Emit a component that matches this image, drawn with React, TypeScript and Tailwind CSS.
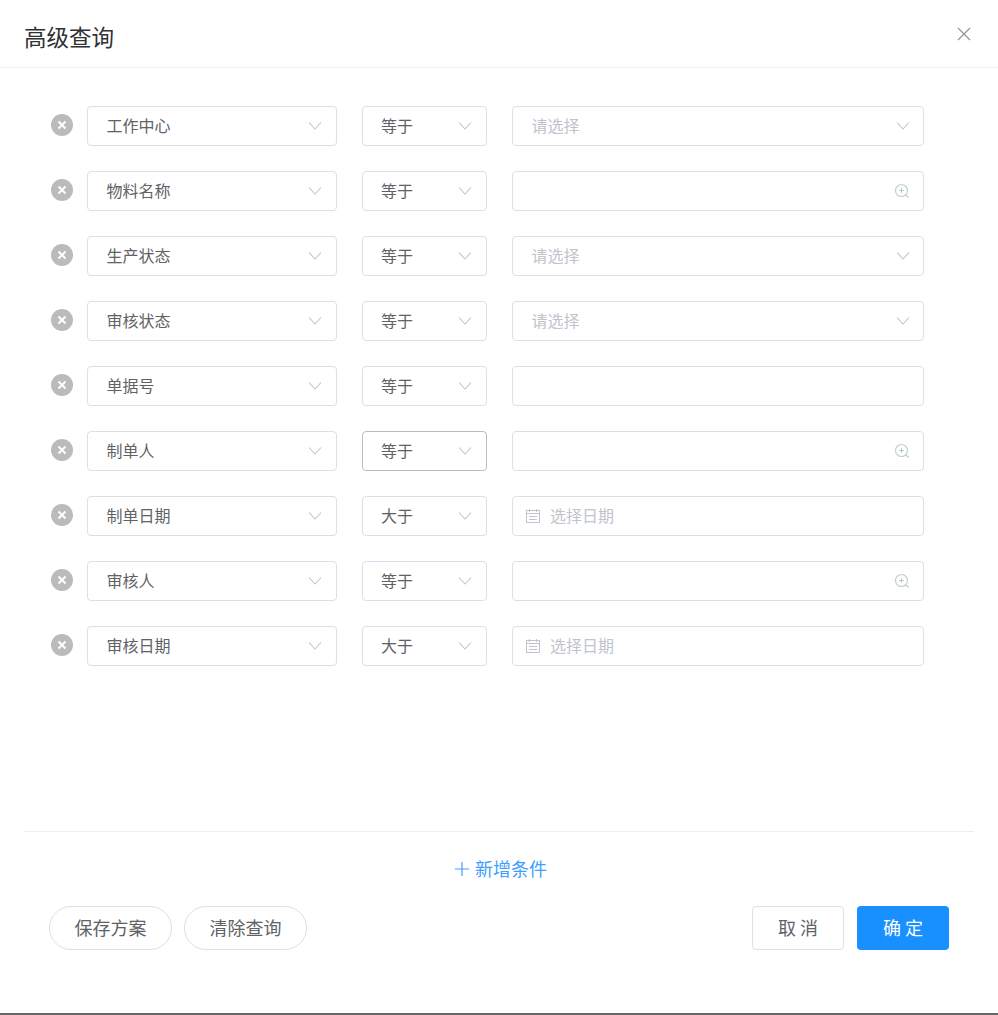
import React from 'react';

const Chevron = () => (
  <svg width="14" height="10" viewBox="0 0 14 10" fill="none" className="shrink-0">
    <path d="M1 1.500 7 8l6-6.500" stroke="#c0c4cc" strokeWidth="1.100" />
  </svg>
);

const RemoveIcon = () => (
  <svg width="22" height="22" viewBox="0 0 22 22" className="shrink-0 mt-[7.5px]">
    <circle cx="11" cy="11" r="11" fill="#bbbbbb" />
    <path d="M7.500 7.500l7 7M14.500 7.500l-7 7" stroke="#fff" strokeWidth="2" />
  </svg>
);

const ZoomIcon = () => (
  <svg width="16" height="16" viewBox="0 0 16 16" fill="none" className="shrink-0">
    <circle cx="7.500" cy="7.500" r="6" stroke="#c3cfd0" strokeWidth="1.200" />
    <path d="M11.800 11.800 14.500 14.500" stroke="#c3cfd0" strokeWidth="1.400" />
    <path d="M5.200 7.500h4.600M7.500 5.200v4.600" stroke="#a9c9c4" strokeWidth="1" />
  </svg>
);

const CalendarIcon = () => (
  <svg width="14" height="14" viewBox="0 0 14 14" fill="none" className="shrink-0">
    <rect x="0.500" y="1.500" width="13" height="12" stroke="#c0c4cc" />
    <path d="M3.500 0v3M10.500 0v3M1 4.500h12M3 7.500h8M3 10.500h8" stroke="#c0c4cc" />
  </svg>
);

const fieldBox = 'h-10 rounded-[4px] border bg-white flex items-center text-base';

const Select = ({ value, width, active, pl }: { value: string; width: string; active?: boolean; pl: string }) => (
  <div className={`${fieldBox} ${width} ${pl} pr-[14px] justify-between text-[#606266] ${active ? 'border-[#b9bcc4]' : 'border-[#dcdfe6]'}`}>
    <span className="mb-[2px]">{value}</span>
    <Chevron />
  </div>
);

type ValueField = 'select' | 'lookup' | 'text' | 'date';

const rows: { field: string; op: string; kind: ValueField; active?: boolean }[] = [
  { field: '工作中心', op: '等于', kind: 'select' },
  { field: '物料名称', op: '等于', kind: 'lookup' },
  { field: '生产状态', op: '等于', kind: 'select' },
  { field: '审核状态', op: '等于', kind: 'select' },
  { field: '单据号', op: '等于', kind: 'text' },
  { field: '制单人', op: '等于', kind: 'lookup', active: true },
  { field: '制单日期', op: '大于', kind: 'date' },
  { field: '审核人', op: '等于', kind: 'lookup' },
  { field: '审核日期', op: '大于', kind: 'date' },
];

const ValueInput = ({ kind }: { kind: ValueField }) => {
  if (kind === 'select') {
    return (
      <div className={`${fieldBox} border-[#dcdfe6] w-[412px] pl-[18.5px] pr-[13px] justify-between text-[#c0c4cc]`}>
        <span className="mb-[2px]">请选择</span>
        <Chevron />
      </div>
    );
  }
  if (kind === 'lookup') {
    return (
      <div className={`${fieldBox} border-[#dcdfe6] w-[412px] pr-[13px] justify-end`}>
        <ZoomIcon />
      </div>
    );
  }
  if (kind === 'date') {
    return (
      <div className={`${fieldBox} border-[#dcdfe6] w-[412px] pl-[13px] gap-[10px] text-[#c0c4cc]`}>
        <CalendarIcon />
        <span className="mb-[2px]">选择日期</span>
      </div>
    );
  }
  return <div className={`${fieldBox} border-[#dcdfe6] w-[412px]`} />;
};

const App: React.FC = () => {
  return (
    <div
      className="h-[1015px] w-[998px] bg-white flex flex-col border-b-2 border-[#666666]"
      style={{ fontFamily: '"Noto Sans CJK SC", "Liberation Sans", sans-serif' }}
    >
      <div className="h-[68px] shrink-0 border-b border-[#ebeef5] pl-[24px] pr-[27px] flex items-center justify-between">
        <span className="text-[22.5px] leading-none text-[#303133] mt-[6px]">高级查询</span>
        <svg width="14" height="14" viewBox="0 0 14 14" fill="none">
          <path d="M1 1l12 12M13 1 1 13" stroke="#909399" strokeWidth="1.200" />
        </svg>
      </div>

      <div className="h-[763px] shrink-0 pt-[38px] pl-[51px] flex flex-col gap-[25px]">
        {rows.map((row) => (
          <div key={row.field} className="flex items-start">
            <RemoveIcon />
            <div className="ml-[14px] flex gap-[25px]">
              <Select value={row.field} width="w-[250px]" pl="pl-[18.5px]" />
              <Select value={row.op} width="w-[125px]" pl="pl-[18px]" active={row.active} />
              <ValueInput kind={row.kind} />
            </div>
          </div>
        ))}
      </div>

      <div className="mx-[24px] border-t border-[#ebeef5] h-[182px] flex flex-col">
        <div className="h-[74px] shrink-0 pl-[4px] flex items-center justify-center gap-[6px] text-lg text-[#409eff]">
          <svg width="14" height="14" viewBox="0 0 14 14" fill="none">
            <path d="M7 0v14M0 7h14" stroke="#409eff" strokeWidth="1.200" />
          </svg>
          <span className="mb-[2px]">新增条件</span>
        </div>
        <div className="px-[25px] flex items-start justify-between text-lg text-[#606266]">
          <div className="flex gap-[12px]">
            <button className="w-[123px] h-[44px] pb-[3px] rounded-full border border-[#dcdfe6] bg-white">保存方案</button>
            <button className="w-[123px] h-[44px] pb-[3px] rounded-full border border-[#dcdfe6] bg-white">清除查询</button>
          </div>
          <div className="flex gap-[13px]">
            <button className="w-[92px] h-[44px] pb-[3px] pl-[4px] rounded-[4px] border border-[#dcdfe6] bg-white tracking-[4px]">取消</button>
            <button className="w-[92px] h-[44px] pb-[3px] pl-[4px] rounded-[4px] bg-[#1890ff] text-white tracking-[4px]">确定</button>
          </div>
        </div>
      </div>
    </div>
  );
};

export default App;
